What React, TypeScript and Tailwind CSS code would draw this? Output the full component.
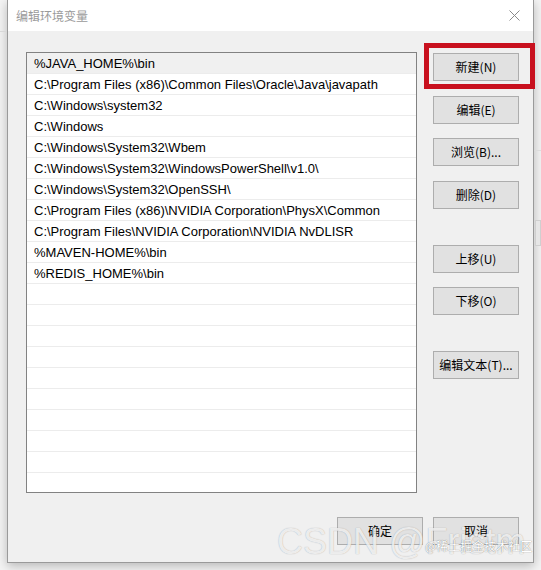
import React from "react";

const paths = [
  "%JAVA_HOME%\\bin",
  "C:\\Program Files (x86)\\Common Files\\Oracle\\Java\\javapath",
  "C:\\Windows\\system32",
  "C:\\Windows",
  "C:\\Windows\\System32\\Wbem",
  "C:\\Windows\\System32\\WindowsPowerShell\\v1.0\\",
  "C:\\Windows\\System32\\OpenSSH\\",
  "C:\\Program Files (x86)\\NVIDIA Corporation\\PhysX\\Common",
  "C:\\Program Files\\NVIDIA Corporation\\NVIDIA NvDLISR",
  "%MAVEN-HOME%\\bin",
  "%REDIS_HOME%\\bin",
];

const sideButtons = [
  { label: "新建(N)", gap: "mt-0" },
  { label: "编辑(E)", gap: "mt-[15px]" },
  { label: "浏览(B)...", gap: "mt-[14px]" },
  { label: "删除(D)", gap: "mt-[15px]" },
  { label: "上移(U)", gap: "mt-[36px]" },
  { label: "下移(O)", gap: "mt-[14px]" },
  { label: "编辑文本(T)...", gap: "mt-[36px]" },
];

const cjk = "font-['Noto_Sans_CJK_SC','Noto_Sans',sans-serif]";

function WinButton({ label, className = "" }: { label: string; className?: string }) {
  return (
    <div
      className={`flex h-[28px] w-[86px] items-center justify-center border border-[#adadad] bg-[#e1e1e1] text-[12px] text-black ${cjk} ${className}`}
    >
      {label}
    </div>
  );
}

export default function App() {
  const rows = Array.from({ length: 21 }, (_, i) => paths[i] ?? "");

  return (
    <div className="relative h-[570px] w-[541px] overflow-hidden bg-[#f4f4f4]">
      {/* background window peeking out */}
      <div className="absolute left-0 top-[31px] h-[1px] w-[7px] bg-[#d8d8d8]" />
      <div className="absolute right-0 top-[150px] h-[1px] w-[7px] bg-[#dcdcdc]" />
      <div className="absolute right-0 top-[220px] h-[26px] w-[6px] border border-[#cfcfcf] bg-[#e6e6e6]" />

      {/* Dialog */}
      <div className="ml-[7px] flex h-[563px] w-[527px] flex-col border-x border-b border-[#9a9a9a] bg-[#f0f0f0] shadow-[0_3px_10px_rgba(0,0,0,0.25)]">
        {/* Title bar */}
        <div className="flex h-[31px] items-center justify-between bg-white pl-[8px] pr-[13px]">
          <span className={`text-[12px] text-[#9a9a9a] ${cjk}`}>编辑环境变量</span>
          <svg width="11" height="11" viewBox="0 0 11 11" className="text-[#8a8a8a]">
            <path d="M0.5 0.5L10.5 10.5M10.5 0.5L0.5 10.5" stroke="currentColor" strokeWidth="1" />
          </svg>
        </div>

        {/* Body */}
        <div className="flex flex-1 flex-col pl-[18px] pr-[14px] pt-[21px]">
          <div className="flex items-start gap-[16px]">
            <div className="h-[441px] w-[391px] overflow-hidden border border-[#828282] bg-white">
              {rows.map((p, i) => (
                <div
                  key={i}
                  className={`flex h-[21px] items-center border-b border-[#ececec] pl-[7px] pt-[1px] font-['Liberation_Sans',Arial,sans-serif] text-[13px] text-black ${
                    i === 0 ? "bg-[#f0f0f0]" : ""
                  }`}
                >
                  {p}
                </div>
              ))}
            </div>
            <div className="flex flex-col pt-[1px]">
              {sideButtons.map((b) => (
                <WinButton key={b.label} label={b.label} className={b.gap} />
              ))}
            </div>
          </div>

          <div className="mt-[24px] flex justify-end gap-[10px]">
            <WinButton label="确定" className="w-[85px]" />
            <WinButton label="取消" />
          </div>
        </div>
      </div>

      {/* annotation frame */}
      <div className="absolute left-[424px] top-[43px] h-[46px] w-[111px] border-[5px] border-[#c8101e]" />

      {/* watermarks */}
      <div className="absolute left-[277px] top-[524px] font-['Liberation_Sans',Arial,sans-serif] text-[36px] leading-none text-white/80 [text-shadow:0_0_1px_rgba(0,0,0,0.35)]">
        CSDN @Fristm
      </div>
      <div
        className={`absolute left-[425px] top-[540px] text-[12px] leading-none text-white [text-shadow:0_0_1px_rgba(0,0,0,0.6)] ${cjk}`}
      >
        @稀土掘金技术社区
      </div>
    </div>
  );
}
